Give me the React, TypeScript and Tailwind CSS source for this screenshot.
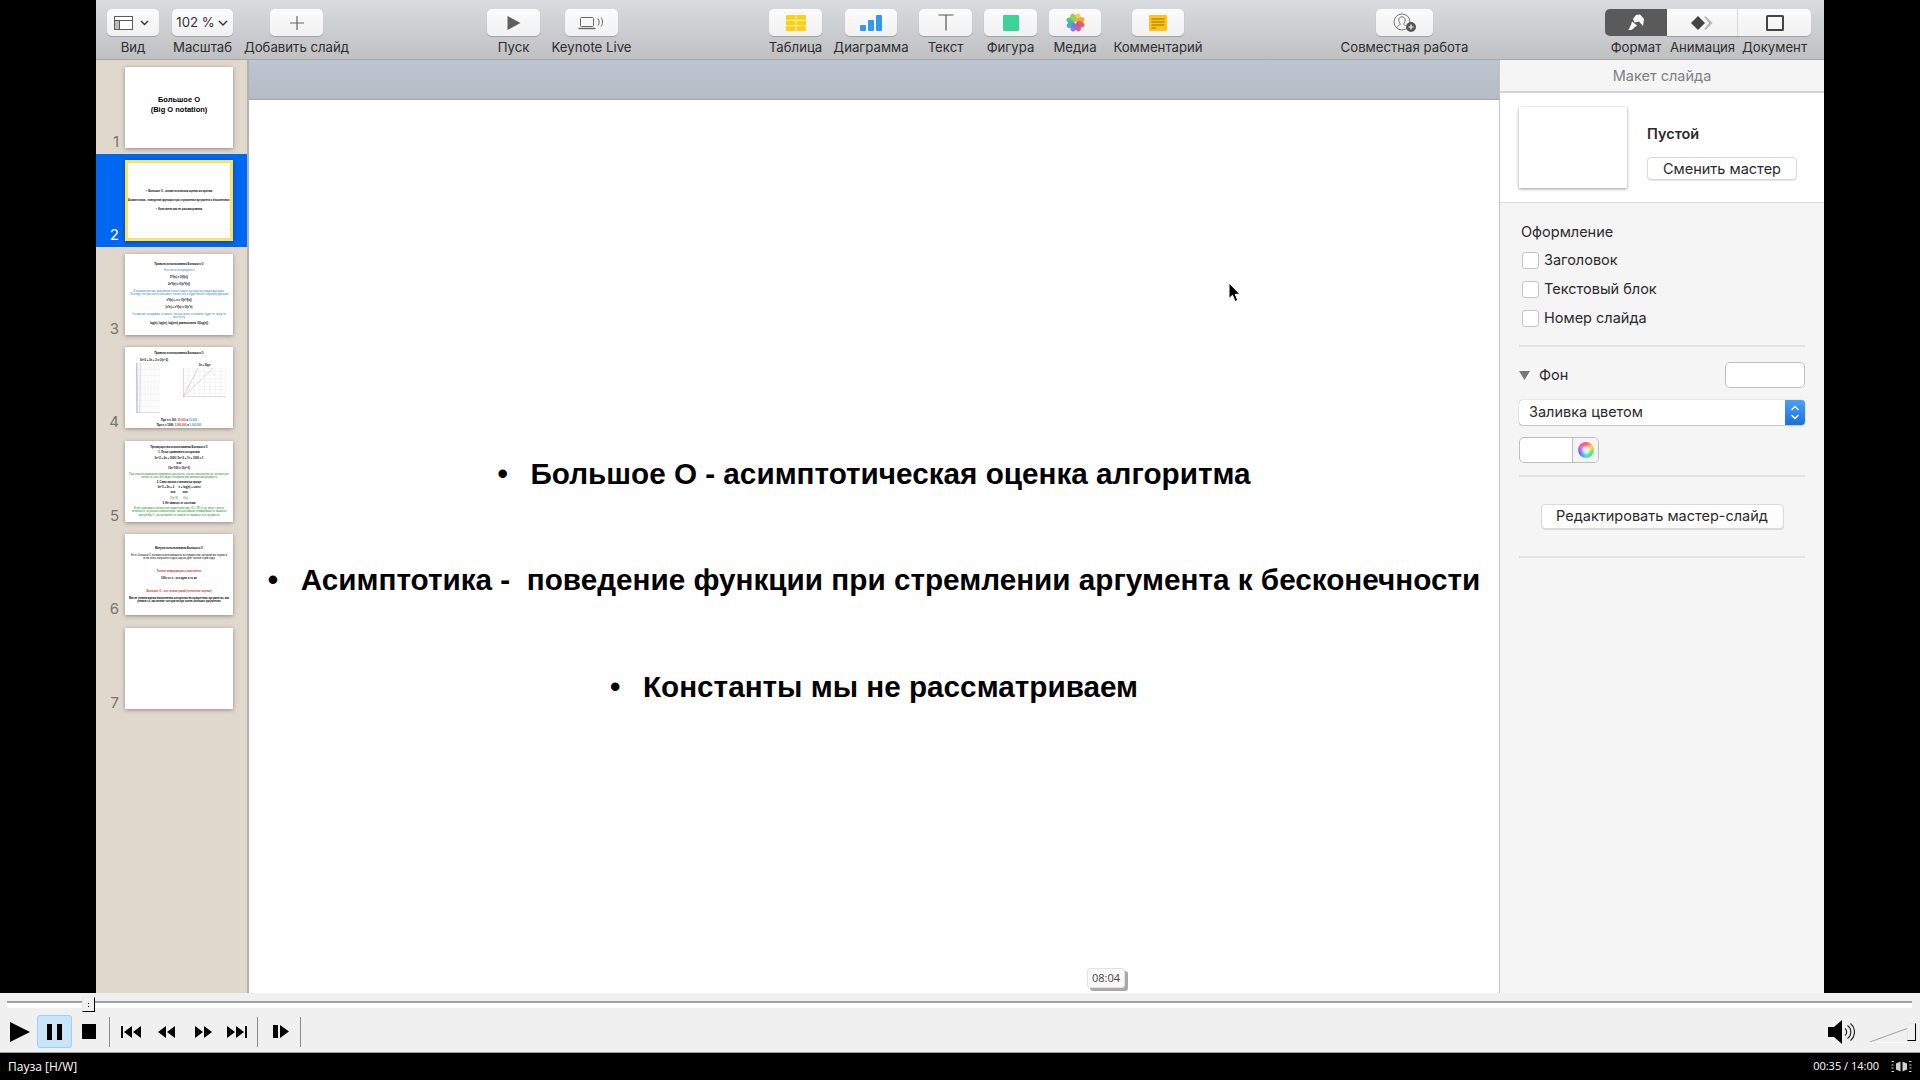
import type { ReactNode } from 'react';

const ui = "font-['Inter',sans-serif]";

type ThumbLine = { text: string; tone?: 'black' | 'blue' | 'green' | 'red'; bold?: boolean };

const toneClass = {
  black: 'text-black',
  blue: 'text-[#2f86d6]',
  green: 'text-[#1f8a2e]',
  red: 'text-[#c0392b]',
};

const slide3: ThumbLine[] = [
  { text: 'Правила использования Большого О', bold: true },
  { text: 'Константы игнорируются', tone: 'blue' },
  { text: '5*f(n) = O(f(n))', bold: true },
  { text: '2n*f(n) = O(n*f(n))', bold: true },
  { text: 'В выражениях мы учитываем только самую быструю растущую функцию. Поэтому, что при очень больших n только она и будет менять характер функции', tone: 'blue' },
  { text: 'n*f(n) + n = O(n*f(n))', bold: true },
  { text: '(n*n) + n*f(n) = O(n*n)', bold: true },
  { text: 'Основание логарифма не важно, так как смена основания будет не сразу на константу', tone: 'blue' },
  { text: 'log(n), log(m), log(nm) равносильно O(log(n))', bold: true },
];

const slide5: ThumbLine[] = [
  { text: 'Преимущества использования Большого О', bold: true },
  { text: '1. Легко сравнивать алгоритмы', bold: true },
  { text: '3n^2 + 2n + 1000 / 5n^2 + 7n + 1000 = 1', bold: true },
  { text: 'или', bold: true },
  { text: '10n^100 = O(n^3)', bold: true },
  { text: 'При этом мы можем игнорировать константы, так как показатели нас интересуют только то, как себя ведет алгоритм при увеличении аргумента', tone: 'green' },
  { text: '2. Само запись становится проще', bold: true },
  { text: '3n^3 + 5n + 2      n + log(n) + const', bold: true },
  { text: 'или          или', bold: true },
  { text: 'O(n^3)       O(n)', tone: 'green' },
  { text: '3. Не зависит от системы', bold: true },
  { text: 'Если сравнивать конкретные характеристики, ОС, ЯП и т.д. могут сильно отличаться на разных компьютерах, мы оцениваем независимые от машины оценки Big O, так как время не зависит от машины и от аргумента', tone: 'green' },
];

const slide6: ThumbLine[] = [
  { text: 'Минусы использования Большого О', bold: true },
  { text: 'Есть большая О занижена или завышена инструментом, который мы берем и если этого получается одна оценка для тысячи строк кода', bold: false },
  { text: '', bold: false },
  { text: 'Точное информация о константах', tone: 'red', bold: true },
  { text: '100n vs n - это одно и то же', bold: true },
  { text: '', bold: false },
  { text: 'Большое О - это только узкий (отнесение оценки)', tone: 'red', bold: true },
  { text: 'Мы не узнаем время выполнения алгоритма на конкретных аргументах, мы узнаем то, как меняет алгоритм при очень больших аргументах', bold: true },
];

function ThumbText({ lines, tight }: { lines: ThumbLine[]; tight?: boolean }) {
  return (
    <div
      className={`flex h-full w-full flex-col items-center justify-center px-[3px] font-['Liberation_Sans',sans-serif] ${tight ? 'gap-[2.2px]' : 'gap-[3.6px]'}`}
    >
      {lines.map((line, i) => (
        <div
          key={i}
          className={`min-h-[3px] whitespace-pre-wrap text-center text-[2.65px] leading-[3.100px] ${line.bold ? 'font-bold' : ''} ${toneClass[line.tone ?? 'black']}`}
        >
          {line.text}
        </div>
      ))}
    </div>
  );
}

function Thumb1() {
  return (
    <div className="flex h-full w-full flex-col items-center justify-center pb-[5px] font-['Liberation_Sans',sans-serif] text-[7.5px] font-bold leading-[10px] text-black">
      <div>Большое О</div>
      <div>(Big O notation)</div>
    </div>
  );
}

function Thumb2() {
  return (
    <div className="flex h-full w-full flex-col items-center justify-center gap-[6px] whitespace-nowrap font-['Liberation_Sans',sans-serif] text-[2.65px] font-bold leading-[3px] text-black">
      <div>•&nbsp;&nbsp;Большое О - асимптотическая оценка алгоритма</div>
      <div>•&nbsp;&nbsp;Асимптотика - поведение функции при стремлении аргумента к бесконечности</div>
      <div>•&nbsp;&nbsp;Константы мы не рассматриваем</div>
    </div>
  );
}

function MiniChart({ lines, className }: { lines: string[]; className: string }) {
  return (
    <svg viewBox="0 0 100 100" preserveAspectRatio="none" className={className}>
      {[0, 1, 2, 3, 4, 5, 6, 7, 8].map((i) => (
        <g key={i} stroke="#e3e3e3" strokeWidth="1">
          <line x1={i * 12.5} y1="0" x2={i * 12.5} y2="100" />
          <line x1="0" y1={i * 12.5} x2="100" y2={i * 12.5} />
        </g>
      ))}
      <path d="M0 0V100H100" fill="none" stroke="#9a9a9a" strokeWidth="1.5" />
      {lines.map((d, i) => (
        <path key={i} d={d} fill="none" stroke={i === 0 ? '#e5a5a5' : '#a5c0e5'} strokeWidth="1.5" />
      ))}
    </svg>
  );
}

function Thumb4() {
  return (
    <div className="flex h-full w-full flex-col items-center pt-[5px] font-['Liberation_Sans',sans-serif] text-[2.65px] font-bold leading-[3.100px] text-black">
      <div>Правила использования Большого О</div>
      <div className="mt-[4px] flex w-full flex-1 pl-[11px] pr-[7px]">
        <div className="flex w-[36px] flex-col">
          <div className="text-center">5n^2 + 3n + 2 = O(n^2)</div>
          <MiniChart lines={['M4 100L2 0', 'M7 100L5 0', 'M16 100L18 0']} className="mt-[1px] h-[50px] w-[24px]" />
        </div>
        <div className="ml-[11px] flex flex-1 flex-col pt-[5px]">
          <div className="text-center">3n + 5lgn</div>
          <MiniChart lines={['M0 100L35 0', 'M0 100L70 0']} className="mt-[1px] h-[29px] w-full" />
        </div>
      </div>
      <div className="mb-[1px] flex flex-col items-center gap-[2px]">
        <div>
          При n = 100: <span className="text-[#c0392b]">30,000</span> и <span className="text-[#3b8fd9]">10,000</span>
        </div>
        <div>
          При n = 1000: <span className="text-[#c0392b]">3,000,000</span> и <span className="text-[#3b8fd9]">1,000,000</span>
        </div>
      </div>
    </div>
  );
}

const thumbs: ReactNode[] = [
  <Thumb1 key="1" />,
  <Thumb2 key="2" />,
  <ThumbText key="3" lines={slide3} />,
  <Thumb4 key="4" />,
  <ThumbText key="5" lines={slide5} tight />,
  <ThumbText key="6" lines={slide6} />,
  null,
];

function ToolItem({ label, className, children }: { label: string; className: string; children: ReactNode }) {
  return (
    <div className={`flex flex-col items-center ${className}`}>
      <div className="flex h-[27px] w-full items-center justify-center rounded-[5px] bg-gradient-to-b from-[#fbfbfb] to-[#f1f1f1] shadow-[0_1px_1px_rgba(0,0,0,0.22)]">
        {children}
      </div>
      <div className="mt-[3px] whitespace-nowrap text-[13.200px] leading-[17px] text-[#2e2e2e]">{label}</div>
    </div>
  );
}

function Toolbar() {
  return (
    <div className={`flex h-[60px] shrink-0 border-b border-[#a6a6a6] bg-gradient-to-b from-[#d9dde0] to-[#bfc0c2] pl-[11px] pt-[9px] ${ui}`}>
      <ToolItem label="Вид" className="w-[52px]">
        <svg width="40" height="18" viewBox="0 0 40 18" fill="none">
          <rect x="1.5" y="2.5" width="18" height="13" fill="#fff" stroke="#5a5a5a" />
          <rect x="1.5" y="6.5" width="5" height="9" fill="#bdbdbd" stroke="#5a5a5a" />
          <path d="M1.5 6.5H19.5" stroke="#5a5a5a" />
          <path d="M28 7l3.5 3.5L35 7" stroke="#333" strokeWidth="1.4" />
        </svg>
      </ToolItem>
      <ToolItem label="Масштаб" className="ml-[13px] w-[61px]">
        <span className="text-[13.200px] text-[#333]">102 %</span>
        <svg width="12" height="10" viewBox="0 0 12 10" fill="none" className="ml-[2px]">
          <path d="M2 3l4 4 4-4" stroke="#333" strokeWidth="1.4" />
        </svg>
      </ToolItem>
      <ToolItem label="Добавить слайд" className="ml-[37px] w-[53px]">
        <svg width="16" height="16" viewBox="0 0 16 16" stroke="#666" strokeWidth="1.2">
          <path d="M8 1V15M1 8H15" />
        </svg>
      </ToolItem>
      <ToolItem label="Пуск" className="ml-[164px] w-[53px]">
        <svg width="14" height="16" viewBox="0 0 14 16" fill="#5f5f5f">
          <path d="M0.5 1L13.5 8L0.5 15Z" />
        </svg>
      </ToolItem>
      <ToolItem label="Keynote Live" className="ml-[25px] w-[53px]">
        <svg width="28" height="16" viewBox="0 0 28 16" fill="none" stroke="#666">
          <rect x="2.5" y="2.5" width="13" height="9" rx="1" />
          <path d="M0.5 13.5H17.5" strokeWidth="1.4" />
          <path d="M20 3.5c1.5 2 1.5 5 0 7M23 2.5c2 2.5 2 6.500 0 9" />
        </svg>
      </ToolItem>
      <ToolItem label="Таблица" className="ml-[151px] w-[53px]">
        <svg width="20" height="16" viewBox="0 0 20 16">
          <rect width="20" height="16" rx="1" fill="#ffcf14" />
          <path d="M0 5.300H20M0 10.600H20M10 0V16" stroke="#fff4b8" strokeWidth="1" />
        </svg>
      </ToolItem>
      <ToolItem label="Диаграмма" className="ml-[23px] w-[52px]">
        <svg width="22" height="16" viewBox="0 0 22 16" fill="#2f9bf0">
          <rect x="0" y="10" width="6" height="6" rx="1" />
          <rect x="8" y="5" width="6" height="11" rx="1" />
          <rect x="16" y="0" width="6" height="16" rx="1" />
        </svg>
      </ToolItem>
      <ToolItem label="Текст" className="ml-[22px] w-[53px]">
        <svg width="16" height="17" viewBox="0 0 16 17" stroke="#555" strokeWidth="1.2" fill="none">
          <path d="M0.500 1H15.500M8 1V16.500" />
        </svg>
      </ToolItem>
      <ToolItem label="Фигура" className="ml-[12px] w-[53px]">
        <div className="h-[16px] w-[16px] rounded-[1px] bg-[#3bd39a]" />
      </ToolItem>
      <ToolItem label="Медиа" className="ml-[12px] w-[52px]">
        <svg width="19" height="19" viewBox="-10 -10 20 20">
          {['#f6c945', '#f59a38', '#ee4f4f', '#d24b9b', '#8e6bd6', '#4f8fe6', '#3cbf8b', '#8ccf4a'].map((c, i) => (
            <ellipse key={c} cx="0" cy="-5.500" rx="3" ry="4.500" fill={c} opacity="0.9" transform={`rotate(${i * 45 + 20})`} />
          ))}
        </svg>
      </ToolItem>
      <ToolItem label="Комментарий" className="ml-[31px] w-[52px]">
        <svg width="18" height="16" viewBox="0 0 18 16">
          <rect width="18" height="16" rx="1" fill="#fdc414" />
          <path d="M2.500 4H15.500M2.500 7H15.500M2.500 10H15.500M2.500 13H7" stroke="#8a6a10" strokeWidth="0.9" />
        </svg>
      </ToolItem>
      <ToolItem label="Совместная работа" className="ml-[192px] w-[57px]">
        <svg width="24" height="20" viewBox="0 0 24 20" fill="none" stroke="#666" strokeWidth="0.9">
          <circle cx="9" cy="9" r="8" />
          <path d="M3.500 15c1-2.500 3-3 3.800-3.500 0-1-1.500-2-1.500-4.500 0-2 1.300-3.200 3.200-3.200s3.200 1.200 3.200 3.200c0 2.500-1.500 3.500-1.500 4.500.8.500 2.800 1 3.800 3.500" />
          <circle cx="18" cy="14" r="5" fill="#555" stroke="none" />
          <path d="M18 11.500V16.500M15.500 14H20.500" stroke="#fff" strokeWidth="1.2" />
        </svg>
      </ToolItem>
      <div className="ml-[172px] flex w-[206px]">
        <div className="flex w-[62px] flex-col items-center">
          <div className="flex h-[27px] w-full items-center justify-center rounded-l-[5px] bg-[#5a5a5a]">
            <svg width="18" height="17" viewBox="0 0 18 17" fill="#fff">
              <path d="M9 1L13 0.500L17 5L16 12L12 7.500L7.500 8.500L6 5Z" />
              <path d="M5 7.500L10 11.500L7.500 13.500C6 14.500 6 16.500 1 16C3 15 2.500 12.500 4 11Z" />
            </svg>
          </div>
          <div className="mt-[3px] whitespace-nowrap text-[13.200px] leading-[17px] text-[#2e2e2e]">Формат</div>
        </div>
        <div className="flex w-[71px] flex-col items-center">
          <div className="flex h-[27px] w-full items-center justify-center border-r border-[#dcdcdc] bg-gradient-to-b from-[#fbfbfb] to-[#f1f1f1] shadow-[0_1px_1px_rgba(0,0,0,0.22)]">
            <svg width="22" height="14" viewBox="0 0 22 14">
              <path d="M15 0.500L21.500 7L15 13.500L13 13.500L18 7L13 0.500Z" fill="#b5b5b5" />
              <path d="M7 0L14 7L7 14L0 7Z" fill="#444" />
            </svg>
          </div>
          <div className="mt-[3px] whitespace-nowrap text-[13.200px] leading-[17px] text-[#2e2e2e]">Анимация</div>
        </div>
        <div className="flex w-[73px] flex-col items-center">
          <div className="flex h-[27px] w-full items-center justify-center rounded-r-[5px] bg-gradient-to-b from-[#fbfbfb] to-[#f1f1f1] shadow-[0_1px_1px_rgba(0,0,0,0.22)]">
            <div className="h-[16px] w-[18px] rounded-[1.500px] border-[2.500px] border-[#444]" />
          </div>
          <div className="mt-[3px] whitespace-nowrap text-[13.200px] leading-[17px] text-[#2e2e2e]">Документ</div>
        </div>
      </div>
    </div>
  );
}

function Sidebar() {
  return (
    <div className={`h-full w-[153px] shrink-0 border-r-2 border-[#b5b2ae] bg-[#e0d7cd] ${ui}`}>
      {thumbs.map((thumb, i) => {
        const selected = i === 1;
        return (
          <div
            key={i}
            className={`flex h-[93.6px] items-start pl-[5px] pt-[6.500px] ${selected ? 'bg-[#0068f0]' : ''}`}
          >
            <div className={`flex h-[84px] w-[19px] items-end justify-end pr-[1px] text-[15px] leading-[18px] ${selected ? 'text-white' : 'text-[#77736e]'}`}>
              {i + 1}
            </div>
            <div
              className={`ml-[5px] h-[81px] w-[108px] shrink-0 overflow-hidden bg-white shadow-[0_1px_4px_rgba(0,0,0,0.35)] ${selected ? 'border-[3px] border-[#fde25c]' : ''}`}
            >
              {thumb}
            </div>
          </div>
        );
      })}
    </div>
  );
}

function Canvas() {
  const bullets = [
    'Большое О - асимптотическая оценка алгоритма',
    'Асимптотика -  поведение функции при стремлении аргумента к бесконечности',
    'Константы мы не рассматриваем',
  ];
  return (
    <div className="relative flex min-w-0 flex-1 flex-col">
      <div className="h-[40px] shrink-0 bg-gradient-to-b from-[#bdc5d0] to-[#b5bcc6] shadow-[inset_0_-1px_1px_rgba(0,0,0,0.12)]" />
      <div className="flex flex-1 flex-col bg-white pt-[321px] font-['Liberation_Sans',sans-serif] text-[29.700px] font-bold text-black">
        {bullets.map((text) => (
          <div key={text} className="flex h-[106.500px] items-center justify-center whitespace-pre">
            <span className="w-[33px]">•</span>
            {text}
          </div>
        ))}
      </div>
      <svg width="13" height="21" viewBox="0 0 13 21" className="absolute left-[979px] top-[222px]">
        <path d="M1 1V16.500L4.500 13.300L7 19.500L9.800 18.300L7.200 12.300H12Z" fill="#000" stroke="#fff" strokeWidth="1" />
      </svg>
    </div>
  );
}

function Inspector() {
  const checks = ['Заголовок', 'Текстовый блок', 'Номер слайда'];
  return (
    <div className={`flex h-full w-[325px] shrink-0 flex-col border-l border-[#c4c4c4] bg-[#f5f5f5] text-[14.500px] text-[#2b2b2b] ${ui}`}>
      <div className="flex h-[33px] shrink-0 items-center justify-center border-b-2 border-[#d2d2d6] pt-[1px] text-[14.500px] text-[#808080]">
        Макет слайда
      </div>
      <div className="flex h-[110px] shrink-0 items-start border-b border-[#dcdcdc] bg-white pl-[19px] pt-[14px]">
        <div className="h-[81px] w-[108px] bg-white shadow-[0_1px_3px_rgba(0,0,0,0.4)]" />
        <div className="ml-[20px] flex flex-col">
          <div className="mt-[17px] font-semibold leading-[20px]">Пустой</div>
          <div className="mt-[13px] flex h-[23px] w-[150px] items-center justify-center rounded-[4px] border border-[#dadada] bg-white shadow-[0_1px_0_rgba(0,0,0,0.1)]">
            Сменить мастер
          </div>
        </div>
      </div>
      <div className="px-[19px]">
        <div className="ml-[2px] mt-[19px] leading-[20px]">Оформление</div>
        <div className="ml-[3px] mt-[10px] flex flex-col gap-[12.500px]">
          {checks.map((c) => (
            <div key={c} className="flex h-[16.500px] items-center">
              <div className="h-[17px] w-[17px] rounded-[3px] border border-[#c4c4c4] bg-white" />
              <span className="ml-[5px]">{c}</span>
            </div>
          ))}
        </div>
        <div className="mt-[18px] h-[2px] bg-[#e2e2e2]" />
        <div className="mt-[15px] flex h-[27px] items-center">
          <svg width="11" height="9" viewBox="0 0 11 9" fill="#777">
            <path d="M0 0H11L5.500 9Z" />
          </svg>
          <span className="ml-[9px]">Фон</span>
          <div className="ml-auto h-[26px] w-[80px] rounded-[5px] border border-[#c0c0c0] bg-white" />
        </div>
        <div className="mt-[11px] flex h-[25px] items-stretch rounded-[4px] bg-white shadow-[0_0_1px_rgba(0,0,0,0.5),0_1px_1px_rgba(0,0,0,0.15)]">
          <span className="flex flex-1 items-center pl-[10px]">Заливка цветом</span>
          <div className="flex w-[20px] items-center justify-center rounded-r-[4px] bg-gradient-to-b from-[#4ba0f5] to-[#1b6fe0]">
            <svg width="10" height="17" viewBox="0 0 10 17" fill="none" stroke="#fff" strokeWidth="1.4">
              <path d="M1.500 6L5 2.500L8.500 6M1.500 11L5 14.500L8.500 11" />
            </svg>
          </div>
        </div>
        <div className="mt-[12px] flex h-[26px] w-[80px] overflow-hidden rounded-[5px] border border-[#bdbdbd] bg-white">
          <div className="w-[53px] border-r border-[#bdbdbd]" />
          <div className="flex flex-1 items-center justify-center bg-[#f4f4f4]">
            <div className="flex h-[16px] w-[16px] items-center justify-center rounded-full bg-[conic-gradient(#ff5a5a,#ffd84a,#5fe06a,#4fd8e8,#5a7bf0,#e05ae0,#ff5a5a)]">
              <div className="h-[8px] w-[8px] rounded-full bg-white/80 blur-[1px]" />
            </div>
          </div>
        </div>
        <div className="mt-[12px] h-[2px] bg-[#e2e2e2]" />
        <div className="mt-[27px] flex justify-center">
          <div className="flex h-[25px] w-[243px] items-center justify-center rounded-[4px] border border-[#dadada] bg-white shadow-[0_1px_0_rgba(0,0,0,0.1)]">
            Редактировать мастер-слайд
          </div>
        </div>
        <div className="mt-[27px] h-[2px] bg-[#e2e2e2]" />
      </div>
    </div>
  );
}

function PlayerSep({ className }: { className: string }) {
  return <div className={`h-[30px] w-px bg-[#8c8c8c] ${className}`} />;
}

function PlayerBar() {
  return (
    <div className="relative h-[60px] shrink-0 border-b border-[#a0a0a0] bg-[#f0f0f0]">
      <div className="ml-[7px] mr-[8px] mt-[8px] h-[7px] border-t-2 border-[#a0a0a0] bg-white" />
      {/* seek knob */}
      <div className="absolute left-[82px] top-[4px] flex h-[15px] w-[13px] flex-col items-center justify-center gap-[2px] border border-[#e8e8e8] border-b-black border-r-black bg-[#f0f0f0]">
        <div className="h-px w-px bg-black" />
        <div className="h-px w-px bg-black" />
      </div>
      <div className="mt-[7px] flex h-[33px] items-center">
        <svg width="20" height="20" viewBox="0 0 20 20" className="ml-[10px]">
          <path d="M0 0L20 10L0 20Z" fill="#000" />
        </svg>
        <div className="ml-[7px] flex h-[33px] w-[35px] items-center justify-center rounded-[3px] border border-[#99d1ff] bg-[#cce4f7]">
          <div className="flex gap-[5px]">
            <div className="h-[16px] w-[5px] bg-black" />
            <div className="h-[16px] w-[5px] bg-black" />
          </div>
        </div>
        <div className="ml-[10px] h-[15px] w-[14px] bg-black" />
        <PlayerSep className="ml-[13px]" />
        <svg width="20" height="12" viewBox="0 0 20 12" className="ml-[11px]" fill="#000">
          <path d="M0 0H2V12H0ZM11 0V12L3 6ZM20 0V12L12 6Z" />
        </svg>
        <svg width="17" height="12" viewBox="0 0 17 12" className="ml-[17px]" fill="#000">
          <path d="M8 0V12L0 6ZM17 0V12L9 6Z" />
        </svg>
        <svg width="17" height="12" viewBox="0 0 17 12" className="ml-[20px]" fill="#000">
          <path d="M0 0V12L8 6ZM9 0V12L17 6Z" />
        </svg>
        <svg width="20" height="12" viewBox="0 0 20 12" className="ml-[15px]" fill="#000">
          <path d="M0 0V12L8 6ZM9 0V12L17 6ZM18 0H20V12H18Z" />
        </svg>
        <PlayerSep className="ml-[10px]" />
        <svg width="16" height="13" viewBox="0 0 16 13" className="ml-[15px]" fill="#000">
          <path d="M0 0H5V13H0ZM7 0L16 6.500L7 13Z" />
        </svg>
        <PlayerSep className="ml-[11px]" />
        <svg width="27" height="24" viewBox="0 0 27 24" className="ml-auto" fill="none">
          <path d="M0 7H6L14 0V24L6 17H0Z" fill="#000" />
          <path d="M17 8.500a4.500 4.500 0 0 1 0 7M19.500 5.500a8 8 0 0 1 0 13M22.500 3.500a11 11 0 0 1 0 17" stroke="#222" strokeWidth="1.2" />
        </svg>
        <svg width="40" height="16" viewBox="0 0 40 16" className="ml-[13px] mt-[6px]" fill="none">
          <path d="M0.500 15.500L39 1.500" stroke="#a0a0a0" />
          <path d="M0.500 15.500H39" stroke="#fff" />
        </svg>
        <div className="ml-[-1px] mr-[4px] mt-[1px] h-[18px] w-[9px] border border-[#e8e8e8] border-b-black border-r-black bg-[#f0f0f0]" />
      </div>
      {/* seek tooltip */}
      <div className="absolute left-[1087px] top-[-25px] flex h-[20px] w-[38px] items-center justify-center rounded-[3px] border border-[#e2e2e2] bg-[#f8f8f8] font-['Open_Sans',sans-serif] text-[11px] text-[#444] shadow-[3px_3px_0_#a8a8a8]">
        08:04
      </div>
    </div>
  );
}

function StatusBar() {
  return (
    <div className="flex h-[27px] shrink-0 items-center bg-black pl-[8px] pr-[8px] font-['Open_Sans',sans-serif] text-[12px] text-white">
      <span>Пауза [H/W]</span>
      <span className="ml-auto text-[11px]">00:35 / 14:00</span>
      <svg width="21" height="13" viewBox="0 0 21 13" fill="none" className="ml-[12px]">
        <path d="M5 3.500L9.500 1.500V11.500L5 9.500ZM16 3.500L11.500 1.500V11.500L16 9.500Z" fill="#d0d0d0" />
        <path d="M0.500 1.500H3M0.500 5H2.500M0.500 8H2.500M0.500 11.500H3M18 1.500H20.500M18.500 5H20.500M18.500 8H20.500M18 11.500H20.500" stroke="#f2e511" strokeWidth="1.200" />
      </svg>
    </div>
  );
}

export default function App() {
  return (
    <div className="flex h-[1080px] w-[1920px] flex-col overflow-hidden bg-black">
      <div className="flex h-[993px] shrink-0 justify-center">
        <div className="flex h-full w-[1728px] flex-col">
          <Toolbar />
          <div className="flex min-h-0 flex-1">
            <Sidebar />
            <Canvas />
            <Inspector />
          </div>
        </div>
      </div>
      <PlayerBar />
      <StatusBar />
    </div>
  );
}
